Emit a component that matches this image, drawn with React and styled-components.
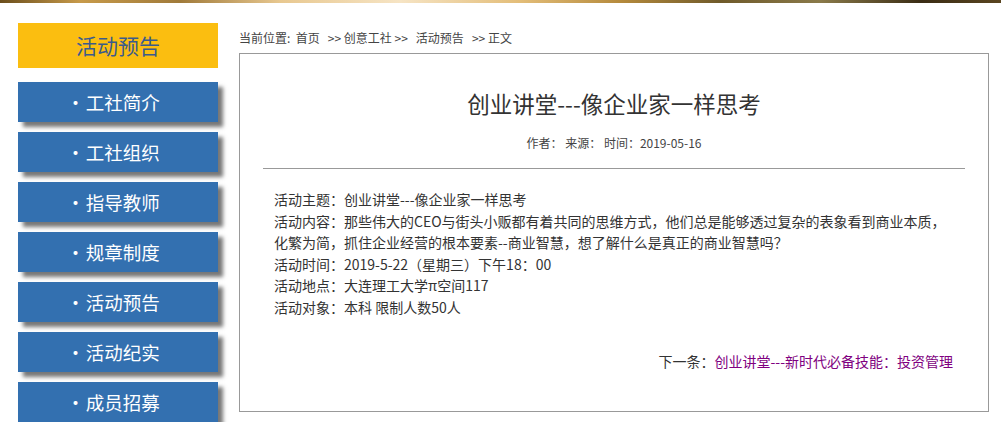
import React from 'react'
import styled, { createGlobalStyle } from 'styled-components'

const GlobalStyle = createGlobalStyle`
  body {
    margin: 0;
    background: #fff;
    font-family: "Microsoft YaHei", "Noto Sans CJK SC", "Liberation Sans", sans-serif;
    color: #333;
  }
`

const Banner = styled.div`
  height: 3px;
  background: linear-gradient(90deg, #6b4e1c 0%, #c79a4a 8%, #a07a3a 18%, #e8c890 28%, #f6e4c4 40%, #e3bd78 52%, #b58a3c 62%, #6f5a2a 72%, #8a7a4a 82%, #3a2c14 92%, #5a4520 100%);
`

const Page = styled.div`
  display: flex;
  align-items: flex-start;
  padding: 20px 0 0 18px;
  gap: 21px;
`

const Sidebar = styled.div`
  width: 200px;
  display: flex;
  flex-direction: column;
`

const SideTitle = styled.div`
  height: 45px;
  background: #fbbe10;
  color: #3b5b8c;
  font-size: 21px;
  line-height: 45px;
  text-align: center;
`

const NavList = styled.div`
  margin-top: 14px;
  display: flex;
  flex-direction: column;
  gap: 10px;
`

const NavButton = styled.a`
  display: block;
  height: 40px;
  line-height: 40px;
  padding-right: 10px;
  background: #3370b0;
  color: #fff;
  font-size: 18.5px;
  text-align: center;
  text-decoration: none;
  box-shadow: 5px 5px 4px #777;
  &::before {
    content: '•';
    margin-right: 1px;
  }
`

const Main = styled.div`
  width: 750px;
  display: flex;
  flex-direction: column;
`

const Crumbs = styled.div`
  font-size: 12px;
  line-height: 30px;
  color: #444;
  white-space: pre;
`

const Article = styled.div`
  border: 1px solid #999;
  height: 357px;
  padding: 0 23px;
  display: flex;
  flex-direction: column;
`

const Title = styled.h1`
  margin: 33px 0 0;
  font-size: 22.5px;
  font-weight: normal;
  text-align: center;
  line-height: 32px;
  color: #333;
`

const Meta = styled.div`
  margin-top: 14px;
  font-size: 12px;
  text-align: center;
  color: #444;
  line-height: 20px;
`

const Rule = styled.hr`
  margin: 15px 0 0;
  border: none;
  border-top: 1px solid #999;
`

const Body = styled.div`
  margin-top: 20px;
  padding: 0 11px;
  font-size: 14px;
  line-height: 21.5px;
  color: #333;
`

const Line = styled.p`
  margin: 0;
`

const Next = styled.div`
  margin-top: 33px;
  text-align: right;
  padding-right: 12px;
  font-size: 14px;
  line-height: 21px;
  color: #333;
  a {
    color: #800080;
    text-decoration: none;
  }
`

const navItems = ['工社简介', '工社组织', '指导教师', '规章制度', '活动预告', '活动纪实', '成员招募']

export default function App() {
  return (
    <>
      <GlobalStyle />
      <Banner />
      <Page>
        <Sidebar>
          <SideTitle>活动预告</SideTitle>
          <NavList>
            {navItems.map(item => (
              <NavButton key={item} href="#">{item}</NavButton>
            ))}
          </NavList>
        </Sidebar>
        <Main>
          <Crumbs>当前位置:  首页   &gt;&gt; 创意工社 &gt;&gt;   活动预告   &gt;&gt; 正文</Crumbs>
          <Article>
            <Title>创业讲堂---像企业家一样思考</Title>
            <Meta>作者： 来源： 时间：2019-05-16</Meta>
            <Rule />
            <Body>
              <Line>活动主题：创业讲堂---像企业家一样思考</Line>
              <Line>活动内容：那些伟大的CEO与街头小贩都有着共同的思维方式，他们总是能够透过复杂的表象看到商业本质，化繁为简，抓住企业经营的根本要素--商业智慧，想了解什么是真正的商业智慧吗？</Line>
              <Line>活动时间：2019-5-22（星期三）下午18：00</Line>
              <Line>活动地点：大连理工大学π空间117</Line>
              <Line>活动对象：本科 限制人数50人</Line>
            </Body>
            <Next>下一条：<a href="#">创业讲堂---新时代必备技能：投资管理</a></Next>
          </Article>
        </Main>
      </Page>
    </>
  )
}
